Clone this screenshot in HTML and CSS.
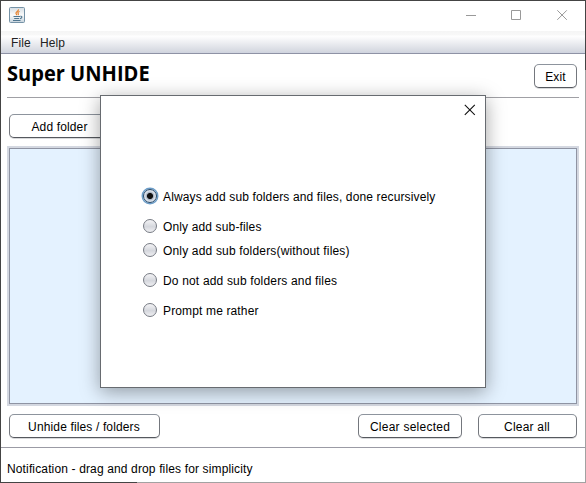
FILE: index.html
```html
<!DOCTYPE html>
<html lang="en">
<head>
<meta charset="utf-8">
<title>Super UNHIDE</title>
<link rel="stylesheet" href="styles.css">
</head>
<body>
<main class="window">
  <header class="titlebar">
    <svg class="java" width="16" height="16" viewBox="0 0 16 16" fill="none">
      <defs><linearGradient id="tile" x1="0" y1="0" x2="0" y2="1"><stop stop-color="#d5dde3"/><stop offset=".5" stop-color="#fafafa"/><stop offset="1" stop-color="#c6d3dc"/></linearGradient></defs>
      <rect x=".5" y=".5" width="15" height="15" rx="1" fill="url(#tile)" stroke="#7592a6"/>
      <path d="M9.500 2.300c.4 1.800-3.200 2.500-2.500 4.200.2.600.8 1 .8 1.700M10.600 4.500c-1.800.6-2 1.500-1.300 2.300.3.500 0 .9-.3 1.200" stroke="#e5822f" stroke-width="1.200"/>
      <path d="M4.500 9.500h6.500M5.200 11.500h5M11.300 9.300c2.300-.6 2 2-.3 2.300M4 13.500h7.500" stroke="#50768f" stroke-width="1.100"/>
    </svg>
    <svg class="controls" width="104" height="12" viewBox="0 0 104 12" fill="none" stroke="#999">
      <path d="M0 5.500h10M45.500 .5h9v9h-9zM91.300.3l9.500 9.500M100.800.3l-9.500 9.500"/>
    </svg>
  </header>
  <nav class="menubar"><span class="file">File</span><span class="help">Help</span></nav>
  <section class="heading"><h1>Super UNHIDE</h1><button class="exit"><span>Exit</span></button></section>
  <section class="toolbar"><button class="add"><span>Add folder</span></button></section>
  <section class="list"></section>
  <section class="actions">
    <button class="unhide"><span>Unhide files / folders</span></button>
    <button class="selected"><span>Clear selected</span></button>
    <button class="all"><span>Clear all</span></button>
  </section>
  <footer><span>Notification - drag and drop files for simplicity</span></footer>
</main>
<div class="edge-right"></div>
<div class="edge-bottom"></div>
<div class="dialog">
  <svg class="close" width="12" height="12" viewBox="0 0 12 12" fill="none" stroke="#111" stroke-width="1.100"><path d="M.8.8l10 10M10.800.8l-10 10"/></svg>
  <div class="options">
    <div class="option"><i class="radio on"></i><span class="o1">Always add sub folders and files, done recursively</span></div>
    <div class="option"><i class="radio"></i><span class="o2">Only add sub-files</span></div>
    <div class="option"><i class="radio"></i><span class="o3">Only add sub folders(without files)</span></div>
    <div class="option"><i class="radio"></i><span class="o4">Do not add sub folders and files</span></div>
    <div class="option"><i class="radio"></i><span class="o5">Prompt me rather</span></div>
  </div>
</div>
</body>
</html>
```

FILE: styles.css
```css
* { box-sizing: border-box; }
body {
  margin: 0;
  width: 586px;
  height: 483px;
  overflow: hidden;
  background: #fff;
  color: #000;
  font: 12px/16px "Liberation Sans", Arial, sans-serif;
  letter-spacing: .14px;
}
.window {
  width: 586px;
  height: 483px;
  border: 1px solid #444;
  display: flex;
  flex-direction: column;
}
.titlebar {
  height: 30px;
  display: flex;
  justify-content: space-between;
  padding: 6px 15px 0 8px;
}
.controls { margin: 3px 0 0; }
.menubar {
  height: 23px;
  padding: 4px 10px 0;
  display: flex;
  gap: 9px;
  color: #222;
  background: linear-gradient(#f5f5f5 0, #f8f8f8 4px, #fff 5px, #d6d9e1 20px, #cfd3df 22px);
  border-bottom: 1px solid #8e92a5;
}
.heading {
  height: 44px;
  margin: 0 6px;
  display: flex;
  justify-content: space-between;
  align-items: flex-start;
  border-bottom: 1px solid #a0a0a5;
}
h1 {
  margin: 6px 0 0;
  font: bold 21px/26px "Open Sans", sans-serif;
  letter-spacing: 0;
  transform: scaleX(.955);
  transform-origin: left;
  white-space: nowrap;
}
button {
  height: 24px;
  padding: 1px 0 0;
  border: 1px solid;
  border-color: #8d949d #74777d #55585e;
  border-radius: 5px;
  background: #fff;
  box-shadow: 0 1px #d8d9db;
  color: #000;
  font: inherit;
  letter-spacing: .14px;
  white-space: nowrap;
}
.exit { width: 43px; margin: 10px 2px 0 0; }
.toolbar { height: 48px; padding: 16px 8px 0; }
.add { width: 101px; }
.list {
  height: 260px;
  margin: 0 6px;
  border: 2px solid #d4d8e1;
  background: #e4f2ff;
  box-shadow: inset 0 0 0 1px #8f94a3;
}
.actions {
  height: 42px;
  padding: 8px 8px 0;
  display: flex;
  border-bottom: 1px solid #9b9ba5;
}
.unhide { width: 151px; padding-right: 1px; }
.selected { width: 104px; margin-left: auto; letter-spacing: .25px; }
.all { width: 99px; margin-left: 16px; padding-right: 1px; letter-spacing: .2px; }
footer { padding: 13px 6px 0; white-space: nowrap; }
.edge-right {
  position: absolute;
  left: 585px;
  top: 70px;
  width: 1px;
  height: 413px;
  background: #a2a2a2;
}
.edge-bottom {
  position: absolute;
  left: 137px;
  top: 482px;
  width: 449px;
  height: 1px;
  background: #a2a2a2;
}
.dialog {
  position: absolute;
  left: 100px;
  top: 95px;
  width: 386px;
  height: 293px;
  border: 1px solid #676b70;
  background: #fff;
  box-shadow: 0 4px 18px rgba(0,0,0,.36);
}
.close { position: absolute; left: 363px; top: 8px; }
.options { padding: 92px 0 0 41px; }
.option {
  display: flex;
  align-items: center;
  height: 16px;
  margin-bottom: 14px;
  white-space: nowrap;
}
.option span { padding-top: 2px; }
.option:nth-child(2) { margin-bottom: 8px; }
.o3, .o4 { letter-spacing: .17px; }
.radio {
  width: 14px;
  height: 14px;
  margin: 0 6px 0 1px;
  border: 1px solid #777b84;
  border-radius: 50%;
  background: linear-gradient(#f4f4f6, #d5d7dd 55%, #efeff2);
}
.on {
  border-color: #234768;
  background: radial-gradient(circle, #111 0 2.600px, #a8b3c1 3.500px, #dde2ea 5px);
  box-shadow: 0 0 0 1.500px #6c9dc8;
}
```
